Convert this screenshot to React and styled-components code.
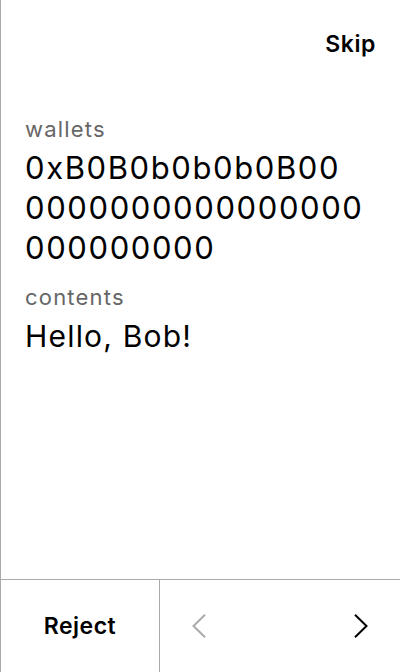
import React from "react";
import styled, { createGlobalStyle } from "styled-components";

const Global = createGlobalStyle`
  html, body { margin: 0; padding: 0; background: #fff; }
  body { font-family: Inter, "Noto Sans", sans-serif; color: #000; }
`;

const Screen = styled.div`
  width: 400px;
  height: 672px;
  box-sizing: border-box;
  border-left: 1px solid #aaa;
  display: flex;
  flex-direction: column;
`;

const TopBar = styled.div`
  display: flex;
  justify-content: flex-end;
  align-items: flex-start;
  padding: 30px 24px 0 24px;
  height: 115px;
  box-sizing: border-box;
`;

const SkipButton = styled.button`
  border: none;
  background: none;
  padding: 0;
  font-family: inherit;
  font-size: 23px;
  line-height: 28px;
  font-weight: 600;
  letter-spacing: 0.6px;
  color: #000;
  cursor: pointer;
`;

const Body = styled.div`
  flex: 1;
  padding: 0 23px 0 24px;
  display: flex;
  flex-direction: column;
`;

const Label = styled.div`
  font-size: 22px;
  line-height: 28px;
  letter-spacing: 1.2px;
  color: #666;
  margin-bottom: 5px;
`;

const Value = styled.div`
  font-size: 30px;
  line-height: 40px;
  letter-spacing: 1.2px;
  color: #000;
  margin-bottom: 15px;
`;

const Address = styled.div`
  display: flex;
  flex-direction: column;
  font-size: 31px;
  line-height: 40px;
  letter-spacing: 1.6px;
  color: #000;
  margin-bottom: 15px;
`;

const AddressLine = styled.span`
  white-space: nowrap;
`;

const BottomBar = styled.div`
  height: 92px;
  border-top: 1px solid #aaa;
  display: grid;
  grid-template-columns: 159px 1fr;
`;

const RejectButton = styled.button`
  border: none;
  border-right: 1px solid #aaa;
  background: none;
  padding: 0;
  font-family: inherit;
  font-size: 23px;
  font-weight: 600;
  letter-spacing: 0.5px;
  color: #000;
  cursor: pointer;
`;

const Nav = styled.div`
  display: flex;
  justify-content: space-between;
  align-items: center;
  padding: 0 32px 0 32px;
`;

const NavButton = styled.button`
  border: none;
  background: none;
  padding: 0;
  width: 14px;
  height: 24px;
  color: ${(p) => (p.$disabled ? "#aaa" : "#000")};
  display: flex;
  align-items: center;
  justify-content: center;
  cursor: pointer;
`;

const Chevron = ({ dir }) => (
  <svg width="14" height="24" viewBox="0 0 14 24" fill="none" style={{ overflow: "visible" }}>
    <path
      d={dir === "left" ? "M13 0.7 L1.5 12 L13 23.3" : "M1 0.7 L12.5 12 L1 23.3"}
      stroke="currentColor"
      strokeWidth="2"
    />
  </svg>
);

const ADDRESS = "0xB0B0b0b0b0B00" + "0".repeat(25);
const ADDRESS_LINES = [ADDRESS.slice(0, 15), ADDRESS.slice(15, 31), ADDRESS.slice(31)];

export default function App() {
  return (
    <>
      <Global />
      <Screen>
        <TopBar>
          <SkipButton>Skip</SkipButton>
        </TopBar>
        <Body>
          <Label>wallets</Label>
          <Address>
            {ADDRESS_LINES.map((line, i) => (
              <AddressLine key={i}>{line}</AddressLine>
            ))}
          </Address>
          <Label>contents</Label>
          <Value>Hello, Bob!</Value>
        </Body>
        <BottomBar>
          <RejectButton>Reject</RejectButton>
          <Nav>
            <NavButton $disabled aria-label="previous"><Chevron dir="left" /></NavButton>
            <NavButton aria-label="next"><Chevron dir="right" /></NavButton>
          </Nav>
        </BottomBar>
      </Screen>
    </>
  );
}
